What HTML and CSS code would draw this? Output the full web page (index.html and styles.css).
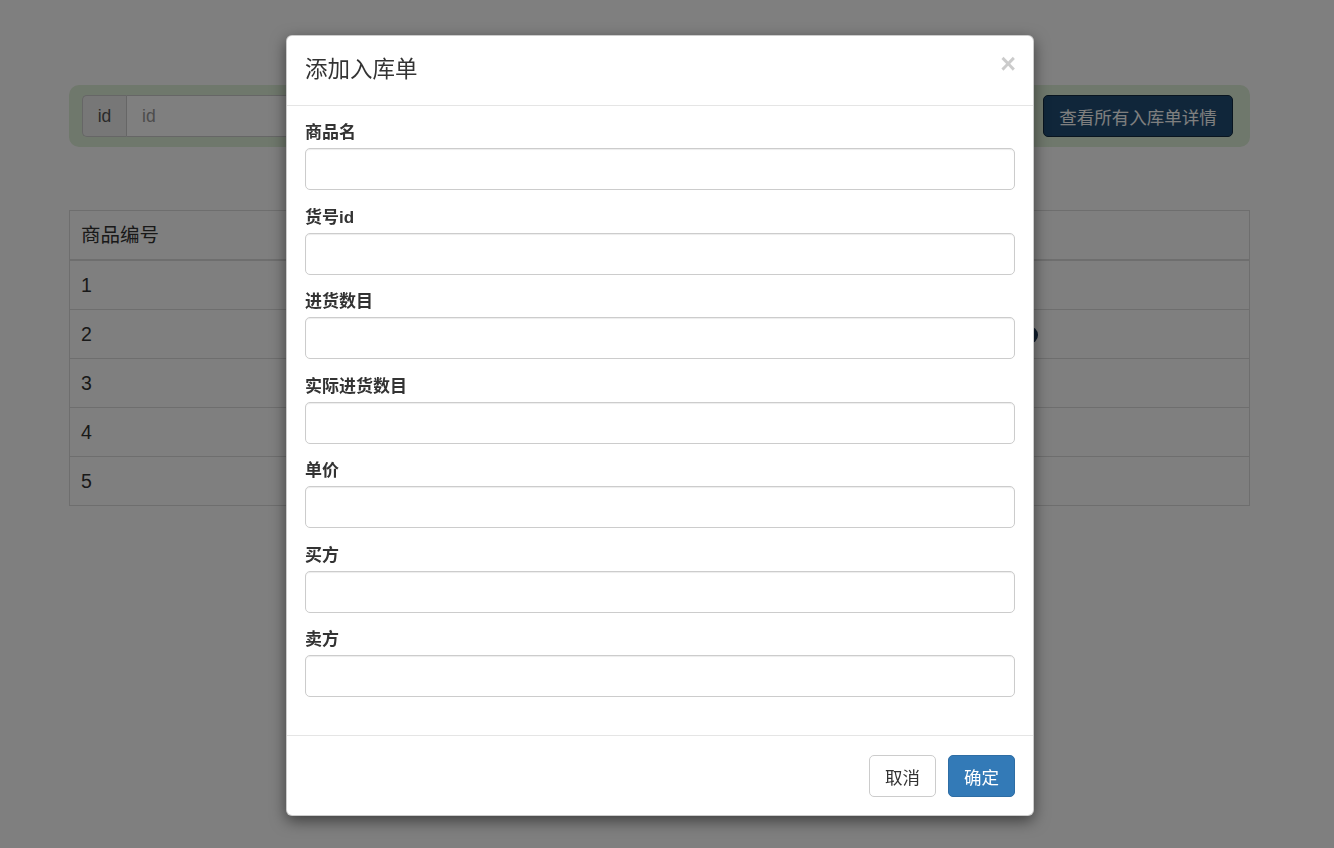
FILE: index.html
```html
<!DOCTYPE html>
<html lang="zh-CN">
<head>
<meta charset="utf-8">
<title>入库单</title>
<link rel="stylesheet" href="styles.css">
</head>
<body>
<div class="page">
  <div class="container">
    <div class="search-bar">
      <div class="input-group">
        <span class="addon">id</span>
        <input class="search-input" type="text" placeholder="id">
      </div>
      <button class="btn-dark">查看所有入库单详情</button>
    </div>
    <table class="table">
      <thead>
        <tr><th class="c1">商品编号</th><th></th></tr>
      </thead>
      <tbody>
        <tr><td class="c1">1</td><td></td></tr>
        <tr><td class="c1 with-pill">2<span class="pill"></span></td><td></td></tr>
        <tr><td class="c1">3</td><td></td></tr>
        <tr><td class="c1">4</td><td></td></tr>
        <tr><td class="c1">5</td><td></td></tr>
      </tbody>
    </table>
  </div>
</div>
<div class="backdrop"></div>
<div class="modal">
  <div class="modal-header">
    <h4 class="modal-title">添加入库单</h4>
    <span class="close">×</span>
  </div>
  <div class="modal-body">
    <div class="form-group"><label>商品名</label><input class="form-control" type="text"></div>
    <div class="form-group"><label>货号id</label><input class="form-control" type="text"></div>
    <div class="form-group"><label>进货数目</label><input class="form-control" type="text"></div>
    <div class="form-group"><label>实际进货数目</label><input class="form-control" type="text"></div>
    <div class="form-group"><label>单价</label><input class="form-control" type="text"></div>
    <div class="form-group"><label>买方</label><input class="form-control" type="text"></div>
    <div class="form-group"><label>卖方</label><input class="form-control" type="text"></div>
  </div>
  <div class="modal-footer">
    <button class="btn btn-default">取消</button>
    <button class="btn btn-primary">确定</button>
  </div>
</div>
</body>
</html>
```
FILE: styles.css
```css
* { box-sizing: border-box; }
html, body { margin: 0; padding: 0; }
body {
  font-family: "Liberation Sans", "Noto Sans CJK SC", sans-serif;
  font-size: 17.5px;
  color: #333;
  background: #fff;
  height: 848px;
  overflow: hidden;
}
.page { padding-top: 85px; }
.container { width: 1181px; margin-left: 69px; }

.search-bar {
  height: 62px;
  background: #dff0d8;
  border-radius: 10px;
  padding: 10px 17px 10px 13px;
  display: flex;
  justify-content: space-between;
}
.input-group { display: flex; width: 880px; height: 42px; }
.addon {
  width: 44px;
  display: flex; align-items: center; justify-content: center;
  background: #eee;
  border: 1px solid #ccc;
  border-right: 0;
  border-radius: 5px 0 0 5px;
  color: #555;
  font-size: 17.5px;
}
.search-input {
  flex: 1;
  border: 1px solid #ccc;
  border-radius: 0 5px 5px 0;
  padding: 0 15px;
  font: inherit;
  font-size: 17.5px;
}
.search-input::placeholder { color: #999; }
.btn-dark {
  width: 190px; height: 42px;
  background: #204d74;
  border: 1px solid #122b40;
  border-radius: 5px;
  color: #fff;
  font: inherit;
  font-size: 17.5px;
  padding: 0;
}

.table {
  margin-top: 63px;
  width: 1181px;
  border-collapse: collapse;
  border: 1px solid #ddd;
  table-layout: fixed;
  font-size: 19.5px;
}
.table th, .table td {
  text-align: left;
  font-weight: normal;
  padding: 10px 11px;
  line-height: 28px;
  border-top: 1px solid #ddd;
  height: 49px;
}
.table th { border-bottom: 2px solid #ddd; height: 49px; }
.table .c1 { width: 971px; }
.with-pill { padding-right: 3px !important; }
.pill {
  float: right;
  width: 30px; height: 18px;
  margin-top: 6px;
  border-radius: 9px;
  background: #1f3a5a;
}

.backdrop {
  position: fixed; inset: 0;
  background: rgba(0,0,0,.5);
}
.modal {
  position: absolute;
  top: 35px; left: 286px;
  width: 748px;
  background: #fff;
  border: 1px solid rgba(0,0,0,.2);
  border-radius: 6px;
  box-shadow: 0 5px 15px rgba(0,0,0,.5);
}
.modal-header {
  display: flex;
  justify-content: space-between;
  align-items: flex-start;
  padding: 19px 19px 20px 18px;
  border-bottom: 1px solid #e5e5e5;
}
.modal-title {
  margin: 0;
  font-size: 22.5px;
  font-weight: normal;
  line-height: 30px;
  color: #333;
}
.close {
  font-size: 27px;
  font-weight: bold;
  line-height: 1;
  color: #000;
  opacity: .2;
  margin-top: -4px;
  margin-right: -2px;
}
.modal-body { padding: 16px 18px 21.5px 18px; }
.form-group { margin-bottom: 16.5px; }
.form-group label {
  display: block;
  font-weight: bold;
  font-size: 17px;
  line-height: 21px;
  margin-bottom: 5px;
}
.form-control {
  display: block;
  width: 100%;
  height: 42px;
  border: 1px solid #ccc;
  border-radius: 5px;
  box-shadow: inset 0 1px 1px rgba(0,0,0,.075);
  font: inherit;
  padding: 0 15px;
}
.modal-footer {
  border-top: 1px solid #e5e5e5;
  padding: 19px 18px 18px 19px;
  display: flex;
  justify-content: flex-end;
  gap: 12px;
}
.btn {
  height: 42px;
  width: 67px;
  padding: 0;
  border-radius: 5px;
  font: inherit;
  font-size: 17.5px;
  border: 1px solid #ccc;
}
.btn-default { background: #fff; color: #333; }
.btn-primary { background: #337ab7; border-color: #2e6da4; color: #fff; }
```
